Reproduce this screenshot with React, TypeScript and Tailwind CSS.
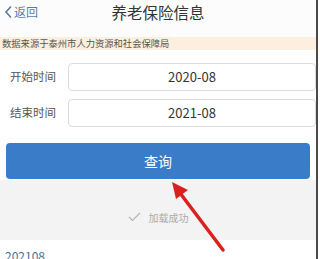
const font = { fontFamily: '"Noto Sans CJK SC", "Noto Sans", Roboto, sans-serif' };

const DateRow = ({ label, value }: { label: string; value: string }) => (
  <div className="flex items-center h-[28px]">
    <div className="w-[68px] pl-[10px] text-[11.5px] text-[#555]">{label}</div>
    <div className="flex-1 h-full flex items-center justify-center border border-[#dcdcdc] rounded-[4px] text-[13px] text-[#333]">
      {value}
    </div>
  </div>
);

const App = () => {
  return (
    <div className="w-[320px] h-[259px] overflow-hidden bg-white relative" style={font}>
      <div className="w-[318px] h-full border-r-2 border-[#4a4a4a] flex flex-col">
        <div className="h-[37px] shrink-0 bg-[#fcfcfc] relative">
          <div className="absolute left-[4px] top-[3px] flex items-center text-[#5a7ca6] text-[12px]">
            <svg width="9" height="14" viewBox="0 0 9 14" className="mr-[1px]">
              <path d="M7 1.5 L2 7 L7 12.5" fill="none" stroke="#5a7ca6" strokeWidth="1.6" />
            </svg>
            返回
          </div>
          <div className="absolute left-0 right-0 top-[1px] text-center text-[15.5px] text-[#333]">养老保险信息</div>
        </div>
        <div className="h-[13px] shrink-0 bg-[#fcefdd] flex items-center pl-[2px] text-[9.3px] text-[#555] leading-none">
          数据来源于泰州市人力资源和社会保障局
        </div>
        <div className="flex flex-col shrink-0 gap-[8px] pt-[13px]">
          <DateRow label="开始时间" value="2020-08" />
          <DateRow label="结束时间" value="2021-08" />
        </div>
        <div className="px-[6px] shrink-0 pt-[16px] pb-[1px]">
          <div className="h-[36px] rounded-[4px] bg-[#3a7cc8] flex items-center justify-center text-white text-[14px]">
            查询
          </div>
        </div>
        <div className="h-[60px] shrink-0 bg-[#f3f3f3] flex items-center justify-center gap-[8px] pt-[14px] text-[10px] text-[#aaa]">
          <svg width="13" height="10" viewBox="0 0 13 10">
            <path d="M1 5 L4.5 8.5 L12 1" fill="none" stroke="#b5b5b5" strokeWidth="1.2" />
          </svg>
          加载成功
        </div>
        <div className="pl-[5px] shrink-0 pt-[7px] text-[12px] text-[#4c6e96]">202108</div>
      </div>
      <svg className="absolute left-0 top-0" width="320" height="259" viewBox="0 0 320 259">
        <line x1="223" y1="250" x2="180" y2="193" stroke="#d8221e" strokeWidth="3.5" strokeLinecap="round" />
        <polygon points="172,182 188,190 176,199" fill="#d8221e" />
      </svg>
    </div>
  );
};

export default App;
